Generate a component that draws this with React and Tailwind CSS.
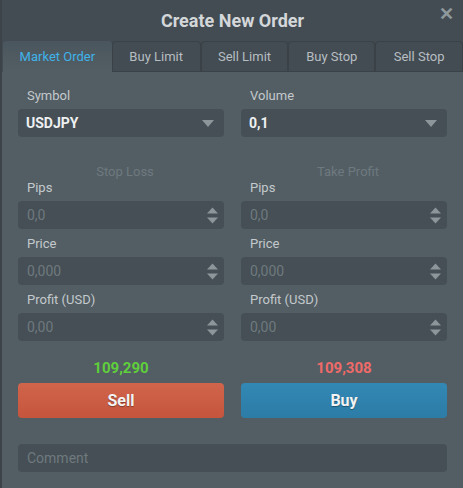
import React from 'react';

const font = { fontFamily: 'Roboto, "Noto Sans", sans-serif' };

const Caret = () => (
  <svg width="12" height="7" viewBox="0 0 12 7" className="shrink-0">
    <path d="M0 0 L12 0 L6 7 Z" fill="#8c969b" />
  </svg>
);

const Spinner = () => (
  <svg width="11" height="17" viewBox="0 0 11 17" className="shrink-0">
    <path d="M0 6.5 L5.5 0.5 L11 6.5 Z" fill="#8c969b" />
    <path d="M0 10.5 L11 10.5 L5.5 16.5 Z" fill="#8c969b" />
  </svg>
);

const SelectBox = ({ value }) => (
  <div className="flex h-[28px] items-center justify-between rounded-[4px] bg-[#454f55] pl-[8px] pr-[10px]">
    <span className="text-[14px] font-bold text-[#eef0f1]">{value}</span>
    <Caret />
  </div>
);

const NumberBox = ({ placeholder }) => (
  <div className="flex h-[28px] items-center justify-between rounded-[4px] bg-[#454f55] pl-[9px] pr-[6px]">
    <span className="text-[14px] text-[#6f797e]">{placeholder}</span>
    <Spinner />
  </div>
);

const Label = ({ children }) => (
  <div className="h-[19px] pl-[9px] text-[13px] leading-[19px] text-[#c3c9cc]">{children}</div>
);

const Field = ({ label, children }) => (
  <div className="flex flex-col gap-[4px]">
    <Label>{label}</Label>
    {children}
  </div>
);

const tabs = [
  { name: 'Market Order', w: 'w-[109px]', active: true },
  { name: 'Buy Limit', w: 'w-[89px]' },
  { name: 'Sell Limit', w: 'w-[88px]' },
  { name: 'Buy Stop', w: 'w-[87px]' },
  { name: 'Sell Stop', w: 'w-[88px]' },
];

const ProtectColumn = ({ title }) => (
  <div className="flex flex-col">
    <div className="h-[12px] pl-[8px] text-center text-[13px] leading-[12px] text-[#6e797f]">{title}</div>
    <div className="flex flex-col gap-[5px]">
      <Field label="Pips">
        <NumberBox placeholder="0,0" />
      </Field>
      <Field label="Price">
        <NumberBox placeholder="0,000" />
      </Field>
      <Field label="Profit (USD)">
        <NumberBox placeholder="0,00" />
      </Field>
    </div>
  </div>
);

export default function App() {
  return (
    <div style={font} className="h-[488px] w-[463px] overflow-hidden border-l-[2px] border-[#3c4449] bg-[#535e64]">
      {/* Header */}
      <div className="bg-[#434c52]">
        <div className="relative flex h-[41px] items-center justify-center">
          <h1 className="text-[18px] font-bold text-[#d3d7d9]">Create New Order</h1>
          <span className="absolute right-[9px] top-[4px] text-[18px] font-bold leading-[20px] text-[#8e989d]">✕</span>
        </div>
        <div className="flex h-[31px] pl-[1px]">
          {tabs.map((t) => (
            <div
              key={t.name}
              className={`flex ${t.w} items-center justify-center rounded-t-[4px] text-[13px] ${
                t.active
                  ? 'bg-gradient-to-b from-[#4a565d] to-[#535e64] text-[#3fb3ea]'
                  : 'border border-b-0 border-[#3a4247] bg-[#434c52] text-[#b7bec2] shadow-[inset_0_-1px_0_#3a4247]'
              }`}
            >
              {t.name}
            </div>
          ))}
        </div>
      </div>

      {/* Body */}
      <div className="px-[16px] pt-[14px]">
        <div className="grid grid-cols-2 gap-x-[17px]">
          <Field label="Symbol">
            <SelectBox value="USDJPY" />
          </Field>
          <Field label="Volume">
            <SelectBox value="0,1" />
          </Field>
        </div>

        <div className="mt-[29px] grid grid-cols-2 gap-x-[17px]">
          <ProtectColumn title="Stop Loss" />
          <ProtectColumn title="Take Profit" />
        </div>

        <div className="mt-[15px] grid grid-cols-2 gap-x-[17px]">
          <div className="flex flex-col">
            <div className="h-[27px] text-center text-[15px] font-bold leading-[25px] text-[#5fcf3b]">109,290</div>
            <button className="h-[35px] rounded-[4px] bg-gradient-to-b from-[#d0654c] to-[#c5553c] text-[16px] font-bold text-[#f3f3f3] [text-shadow:0_1px_1px_rgba(0,0,0,0.35)]">
              Sell
            </button>
          </div>
          <div className="flex flex-col">
            <div className="h-[27px] text-center text-[15px] font-bold leading-[25px] text-[#f06a69]">109,308</div>
            <button className="h-[35px] rounded-[4px] bg-gradient-to-b from-[#3288b4] to-[#2c7ca6] text-[16px] font-bold text-[#f3f3f3] [text-shadow:0_1px_1px_rgba(0,0,0,0.35)]">
              Buy
            </button>
          </div>
        </div>

        <div className="mt-[26px] flex h-[28px] items-center rounded-[4px] bg-[#454f55] pl-[9px]">
          <span className="text-[14px] text-[#6f797e]">Comment</span>
        </div>
      </div>
    </div>
  );
}
